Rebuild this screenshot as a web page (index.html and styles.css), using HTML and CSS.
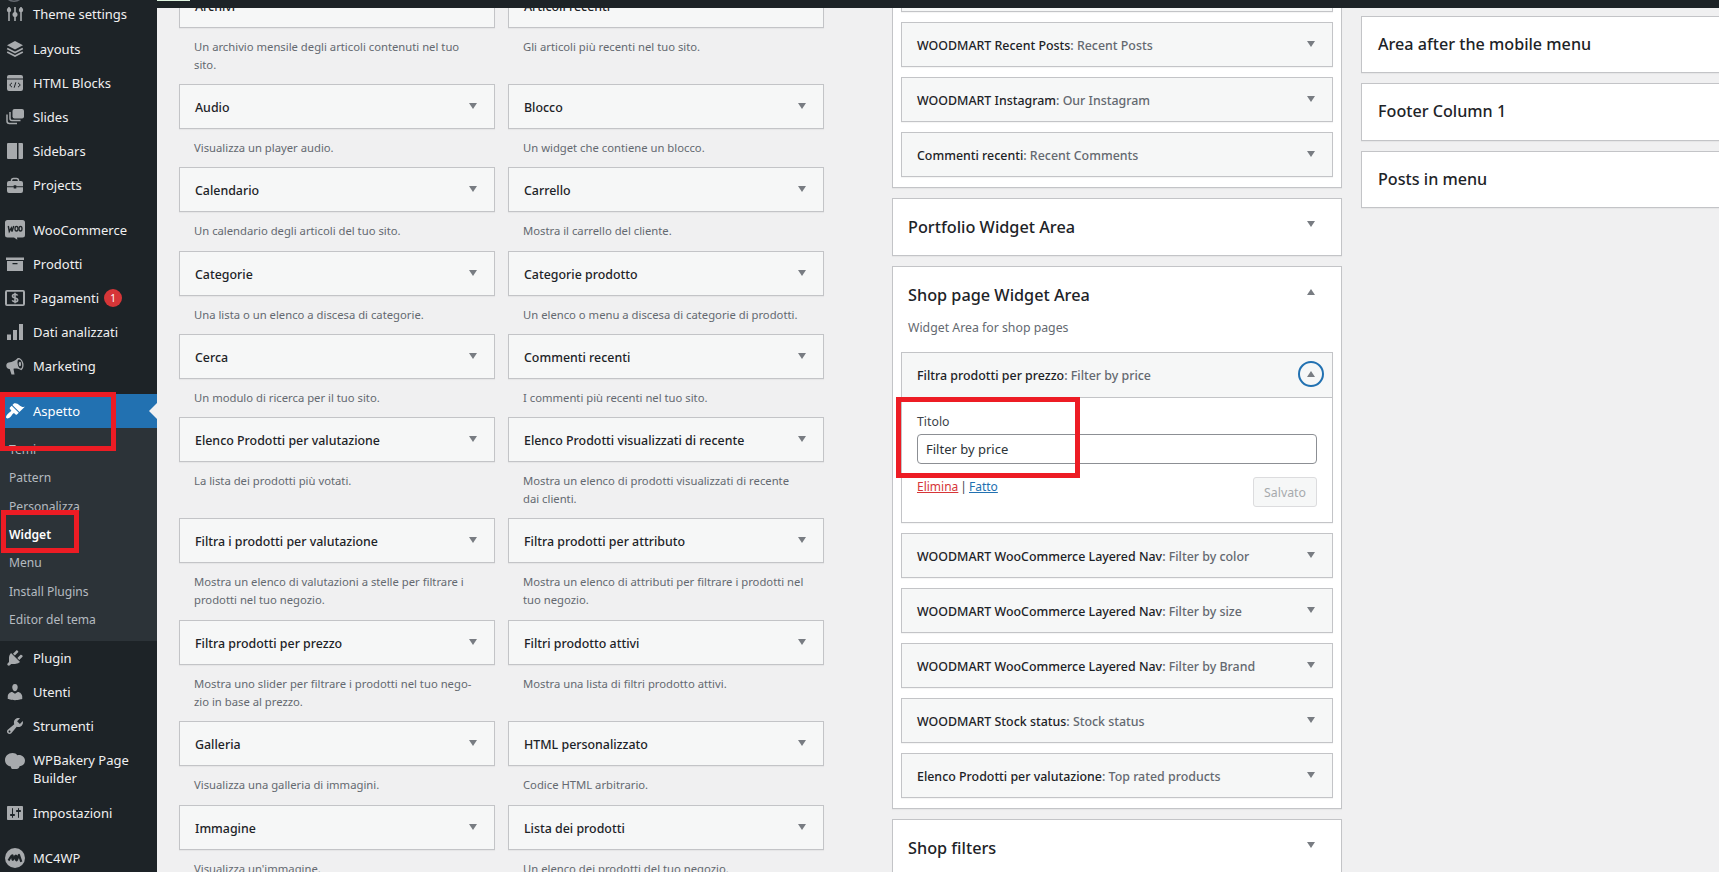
FILE: index.html
```html
<!DOCTYPE html>
<html lang="it">
<head>
    <meta charset="UTF-8">
    <meta name="viewport" content="width=device-width, initial-scale=1.0">
    <title>Widget</title>
    <link rel="stylesheet" href="styles.css">
</head>
<body>
    <!-- Menu di amministrazione -->
    <nav class="admin-menu">
        <svg class="menu-arc" viewBox="0 0 20 4"><path d="M4 0c3 3 9 3 12 0" fill="none" stroke="#646970" stroke-width="1.6"/></svg>
        <ul class="menu">
            <li><a class="menu-item" href="#">
                <svg class="icon" viewBox="0 0 20 20"><path d="M3.2 3h1.6v14H3.2zM9.2 3h1.6v14H9.2zM15.2 3h1.6v14h-1.6z"/><circle cx="4" cy="6" r="2.2"/><circle cx="10" cy="10.500" r="2.500"/><circle cx="16" cy="6" r="2.200"/></svg>
                <span>Theme settings</span></a></li>
            <li><a class="menu-item" href="#">
                <svg class="icon" viewBox="0 0 20 20"><path d="M10 2l8 4.200-8 4.200-8-4.200z"/><path d="M2.200 9.600L10 13.600l7.800-4M2.200 13L10 17l7.800-4" fill="none" stroke="#a7aaad" stroke-width="1.700"/></svg>
                <span>Layouts</span></a></li>
            <li><a class="menu-item" href="#">
                <svg class="icon" viewBox="0 0 20 20"><path d="M4 2h12a2 2 0 0 1 2 2v1.500H2V4a2 2 0 0 1 2-2zM2 6.600h16V16a2 2 0 0 1-2 2H4a2 2 0 0 1-2-2z"/><path d="M7 9.800l-2.300 2.200L7 14.200M13 9.800l2.300 2.200-2.300 2.200M10.800 9.300l-1.600 5.400" fill="none" stroke="#1d2327" stroke-width="1"/></svg>
                <span>HTML Blocks</span></a></li>
            <li><a class="menu-item" href="#">
                <svg class="icon" viewBox="0 0 20 20"><rect x="7.500" y="2" width="11.500" height="9.500" rx="2"/><path d="M5 5v6.500a2 2 0 0 0 2 2h8.500M2 7.500V14a2.500 2.500 0 0 0 2.500 2.500H12" fill="none" stroke="#a7aaad" stroke-width="1.500"/></svg>
                <span>Slides</span></a></li>
            <li><a class="menu-item" href="#">
                <svg class="icon" viewBox="0 0 20 20"><path d="M3 2h9v16H3a1 1 0 0 1-1-1V3a1 1 0 0 1 1-1zM13.500 2H17a1 1 0 0 1 1 1v14a1 1 0 0 1-1 1h-3.500z"/></svg>
                <span>Sidebars</span></a></li>
            <li><a class="menu-item" href="#">
                <svg class="icon" viewBox="0 0 20 20"><path d="M6.500 6V5A2 2 0 0 1 8.500 3.400h3A2 2 0 0 1 13.500 5v1" fill="none" stroke="#a7aaad" stroke-width="1.500"/><path d="M4 6h12a2 2 0 0 1 2 2v3.200h-6.700v-1H8.700v1H2V8a2 2 0 0 1 2-2zM2 12.300h6.700v1.200h2.600v-1.200H18V16a2 2 0 0 1-2 2H4a2 2 0 0 1-2-2z"/></svg>
                <span>Projects</span></a></li>
            <li class="separator"></li>
            <li><a class="menu-item" href="#">
                <svg class="icon" viewBox="0 0 20 20"><path d="M2.500 0h15A2.500 2.500 0 0 1 20 2.500v12.500a2.500 2.500 0 0 1-2.500 2.500h-5.500l.3 2.300-3.300-2.300H2.500A2.500 2.500 0 0 1 0 15V2.500A2.500 2.500 0 0 1 2.500 0z"/><path d="M3.300 6l1 5.500 2-3.500.7 3.500L8.700 6" fill="none" stroke="#1d2327" stroke-width="1.400"/><ellipse cx="11.500" cy="8.700" rx="1.500" ry="2.300" fill="none" stroke="#1d2327" stroke-width="1.300"/><ellipse cx="15.500" cy="8.700" rx="1.500" ry="2.300" fill="none" stroke="#1d2327" stroke-width="1.300"/></svg>
                <span>WooCommerce</span></a></li>
            <li><a class="menu-item" href="#">
                <svg class="icon" viewBox="0 0 20 20"><path d="M1 3.500h18V6H1zM2 7h16v10H2zm5.500 2v1.200h5V9z" fill-rule="evenodd"/></svg>
                <span>Prodotti</span></a></li>
            <li><a class="menu-item" href="#">
                <svg class="icon" viewBox="0 0 20 20"><path d="M2 2h16a2 2 0 0 1 2 2v12a2 2 0 0 1-2 2H2a2 2 0 0 1-2-2V4a2 2 0 0 1 2-2zm0 1.700v12.600h16V3.700z" fill-rule="evenodd"/><path d="M12.600 7.500c-.5-1-1.500-1.300-2.600-1.300-1.500 0-2.500.7-2.500 1.800 0 2.700 5.200 1.200 5.200 4 0 1.200-1.200 1.800-2.700 1.800-1.200 0-2.300-.5-2.700-1.500M10 4.800v10.400" fill="none" stroke="#a7aaad" stroke-width="1.600"/></svg>
                <span>Pagamenti</span><span class="badge">1</span></a></li>
            <li><a class="menu-item" href="#">
                <svg class="icon" viewBox="0 0 20 20"><path d="M2 12.500h4V18H2zM8 8h4v10H8zM14 2h4v16h-4z"/></svg>
                <span>Dati analizzati</span></a></li>
            <li><a class="menu-item" href="#">
                <svg class="icon" viewBox="0 0 20 20"><path d="M12.500 2.200C10.800 4.600 7.500 6 3.600 6.600 1.700 7 1 8.700 1.400 10.400c.4 1.700 1.700 2.700 3.300 2.500L6.500 18.500h3l-1-5.800c3.200-.3 6 .2 7.700 1.600 1.700-.6 2.700-3.700 2.200-6.700-.6-3.300-3.200-6.100-5.900-5.400zm1.200 1.400c1.500-.3 3 1.700 3.400 4.200.4 2.500-.1 4.600-1.300 4.800-1.300.2-2.700-1.800-3.100-4.300-.4-2.500-.2-4.500 1-4.700z" fill-rule="evenodd"/><ellipse cx="14.900" cy="8" rx="1.200" ry="2.200"/></svg>
                <span>Marketing</span></a></li>
            <li class="separator"></li>
            <li><a class="menu-item current" href="#">
                <svg class="icon" viewBox="0 0 20 20"><path d="M14.480 11.060L7.410 3.990l1.500-1.500c.5-.56 2.300-.47 3.510.32 1.210.8 1.430 1.280 2.910 2.100 1.180.64 2.450 1.260 4.450.85zm-.71.71L6.700 4.700 4.930 6.470c-.39.39-.39 1.020 0 1.410l1.060 1.060c.39.39.39 1.030 0 1.420-.6.6-1.430 1.110-2.210 1.690-.35.26-.7.53-1.010.84C1.430 14.230.4 16.080 1.400 17.070c.99 1 2.840-.03 4.180-1.360.31-.31.58-.66.85-1.020.57-.78 1.080-1.610 1.690-2.210.39-.39 1.020-.39 1.410 0l1.060 1.060c.39.39 1.020.39 1.410 0z"/></svg>
                <span>Aspetto</span></a>
                <ul class="submenu">
                    <li>Temi</li>
                    <li>Pattern</li>
                    <li>Personalizza</li>
                    <li class="active">Widget</li>
                    <li>Menu</li>
                    <li>Install Plugins</li>
                    <li>Editor del tema</li>
                </ul>
            </li>
            <li><a class="menu-item" href="#">
                <svg class="icon" viewBox="0 0 20 20"><path d="M13.110 4.360L9.870 7.600 8 5.730l3.240-3.240c.35-.34 1.050-.2 1.560.32.52.51.66 1.210.31 1.550zm-8 1.770l.91-1.120 9.010 9.010-1.190.84c-.71.71-2.630 1.160-3.820 1.160H6.140L4.900 17.260c-.59.59-1.540.59-2.120 0-.59-.58-.59-1.530 0-2.120L4 13.880V10c0-1.190.41-3.160 1.110-3.870zm7.260 3.970l3.240-3.240c.34-.35 1.040-.21 1.550.31.52.51.66 1.210.31 1.550l-3.240 3.250z"/></svg>
                <span>Plugin</span></a></li>
            <li><a class="menu-item" href="#">
                <svg class="icon" viewBox="0 0 20 20"><path d="M10 9.250c-2.270 0-2.730-3.440-2.730-3.440C7 4.020 7.820 2 9.970 2c2.160 0 2.980 2.020 2.710 3.810 0 0-.41 3.440-2.680 3.440zm0 2.570L12.720 10c2.390 0 4.520 2.330 4.520 4.530v2.490s-3.650 1.130-7.240 1.130c-3.650 0-7.240-1.130-7.240-1.130v-2.490c0-2.250 1.940-4.480 4.470-4.480z"/></svg>
                <span>Utenti</span></a></li>
            <li><a class="menu-item" href="#">
                <svg class="icon" viewBox="0 0 20 20"><path d="M16.680 9.770c-1.340 1.340-3.300 1.670-4.950.99l-5.410 6.520c-.99.99-2.590.99-3.580 0s-.99-2.590 0-3.570l6.520-5.420c-.68-1.650-.35-3.610.99-4.950 1.280-1.280 3.120-1.620 4.720-1.060l-2.890 2.890 2.820 2.820 2.860-2.870c.53 1.580.18 3.390-1.080 4.650zM3.810 16.210c.4.39 1.040.39 1.430 0 .4-.4.4-1.040 0-1.430-.39-.4-1.030-.4-1.430 0-.39.39-.39 1.030 0 1.430z"/></svg>
                <span>Strumenti</span></a></li>
            <li><a class="menu-item two-lines" href="#">
                <svg class="icon" viewBox="0 0 20 20"><path d="M7.500 2c2.300 0 3.800.9 4.800 2.200C16.500 3.300 20 6 20 9.700c0 3.200-2.500 5.200-5.400 5.500-.5 1.800-1.400 2.800-3 2.800H7.800c-1.300 0-1.900-1.200-2-2.600C2.300 15 0 12.300 0 9c0-4 3.300-7 7.500-7z"/></svg>
                <span>WPBakery Page Builder</span></a></li>
            <li><a class="menu-item" href="#">
                <svg class="icon" viewBox="0 0 20 20"><path d="M18 16V4c0-.55-.45-1-1-1H3c-.55 0-1 .45-1 1v12c0 .55.45 1 1 1h14c.55 0 1-.45 1-1zM8 11h1c.55 0 1 .45 1 1s-.45 1-1 1H8v1.500c0 .28-.22.5-.5.5s-.5-.22-.5-.5V13H6c-.55 0-1-.45-1-1s.45-1 1-1h1V5.500c0-.28.22-.5.5-.5s.5.22.5.5V11zm5-2h-1c-.55 0-1-.45-1-1s.45-1 1-1h1V5.500c0-.28.22-.5.5-.5s.5.22.5.5V7h1c.55 0 1 .45 1 1s-.45 1-1 1h-1v5.500c0 .28-.22.5-.5.5s-.5-.22-.5-.5V9z"/></svg>
                <span>Impostazioni</span></a></li>
            <li class="separator"></li>
            <li><a class="menu-item" href="#">
                <svg class="icon" viewBox="0 0 20 20"><circle cx="10" cy="10" r="10"/><path d="M3.500 12.500C5 10.500 6 7.500 7.200 7.300c1.200-.2-.6 4.500.6 4.500 1.300 0 1.700-4.300 3-4.300s-.6 4.800.6 4.800c1.400 0 1.500-4.600 2.600-5.300l2.300 6.800" fill="none" stroke="#1d2327" stroke-width="2.200" stroke-linejoin="round"/></svg>
                <span>MC4WP</span></a></li>
        </ul>
    </nav>

    <div class="page">
        <div class="admin-bar"><span class="bar-highlight"></span></div>
        <main class="content">
            <!-- Widget disponibili -->
            <section class="available">
                <div class="available-item"><div class="widget-top">Archivi<i class="arrow"></i></div><p>Un archivio mensile degli articoli contenuti nel tuo<br>sito.</p></div>
                <div class="available-item"><div class="widget-top">Articoli recenti<i class="arrow"></i></div><p>Gli articoli più recenti nel tuo sito.</p></div>
                <div class="available-item"><div class="widget-top">Audio<i class="arrow"></i></div><p>Visualizza un player audio.</p></div>
                <div class="available-item"><div class="widget-top">Blocco<i class="arrow"></i></div><p>Un widget che contiene un blocco.</p></div>
                <div class="available-item"><div class="widget-top">Calendario<i class="arrow"></i></div><p>Un calendario degli articoli del tuo sito.</p></div>
                <div class="available-item"><div class="widget-top">Carrello<i class="arrow"></i></div><p>Mostra il carrello del cliente.</p></div>
                <div class="available-item"><div class="widget-top">Categorie<i class="arrow"></i></div><p>Una lista o un elenco a discesa di categorie.</p></div>
                <div class="available-item"><div class="widget-top">Categorie prodotto<i class="arrow"></i></div><p>Un elenco o menu a discesa di categorie di prodotti.</p></div>
                <div class="available-item"><div class="widget-top">Cerca<i class="arrow"></i></div><p>Un modulo di ricerca per il tuo sito.</p></div>
                <div class="available-item"><div class="widget-top">Commenti recenti<i class="arrow"></i></div><p>I commenti più recenti nel tuo sito.</p></div>
                <div class="available-item"><div class="widget-top">Elenco Prodotti per valutazione<i class="arrow"></i></div><p>La lista dei prodotti più votati.</p></div>
                <div class="available-item"><div class="widget-top">Elenco Prodotti visualizzati di recente<i class="arrow"></i></div><p>Mostra un elenco di prodotti visualizzati di recente<br>dai clienti.</p></div>
                <div class="available-item"><div class="widget-top">Filtra i prodotti per valutazione<i class="arrow"></i></div><p>Mostra un elenco di valutazioni a stelle per filtrare i<br>prodotti nel tuo negozio.</p></div>
                <div class="available-item"><div class="widget-top">Filtra prodotti per attributo<i class="arrow"></i></div><p>Mostra un elenco di attributi per filtrare i prodotti nel<br>tuo negozio.</p></div>
                <div class="available-item"><div class="widget-top">Filtra prodotti per prezzo<i class="arrow"></i></div><p>Mostra uno slider per filtrare i prodotti nel tuo nego-<br>zio in base al prezzo.</p></div>
                <div class="available-item"><div class="widget-top">Filtri prodotto attivi<i class="arrow"></i></div><p>Mostra una lista di filtri prodotto attivi.</p></div>
                <div class="available-item"><div class="widget-top">Galleria<i class="arrow"></i></div><p>Visualizza una galleria di immagini.</p></div>
                <div class="available-item"><div class="widget-top">HTML personalizzato<i class="arrow"></i></div><p>Codice HTML arbitrario.</p></div>
                <div class="available-item"><div class="widget-top">Immagine<i class="arrow"></i></div><p>Visualizza un'immagine.</p></div>
                <div class="available-item"><div class="widget-top">Lista dei prodotti<i class="arrow"></i></div><p>Un elenco dei prodotti del tuo negozio.</p></div>
            </section>

            <!-- Aree widget -->
            <section class="areas">
                <div class="area first">
                    <div class="widget-top"></div>
                    <div class="widget-top">WOODMART Recent Posts<span class="in-title">: Recent Posts</span><i class="arrow"></i></div>
                    <div class="widget-top">WOODMART Instagram<span class="in-title">: Our Instagram</span><i class="arrow"></i></div>
                    <div class="widget-top">Commenti recenti<span class="in-title">: Recent Comments</span><i class="arrow"></i></div>
                </div>
                <div class="area">
                    <h2>Portfolio Widget Area<i class="arrow"></i></h2>
                </div>
                <div class="area open">
                    <h2>Shop page Widget Area<i class="arrow up"></i></h2>
                    <p class="area-description">Widget Area for shop pages</p>
                    <div class="widget">
                        <div class="widget-top">Filtra prodotti per prezzo<span class="in-title">: Filter by price</span><span class="toggle"><i class="arrow up"></i></span></div>
                        <form class="widget-form">
                            <label for="title">Titolo</label>
                            <input type="text" id="title" value="Filter by price">
                            <div class="widget-actions">
                                <div class="links"><a class="delete" href="#">Elimina</a><span>|</span><a href="#">Fatto</a></div>
                                <button type="button" disabled>Salvato</button>
                            </div>
                        </form>
                        <span class="mark mark-title"></span>
                    </div>
                    <div class="widget-top">WOODMART WooCommerce Layered Nav<span class="in-title">: Filter by color</span><i class="arrow"></i></div>
                    <div class="widget-top">WOODMART WooCommerce Layered Nav<span class="in-title">: Filter by size</span><i class="arrow"></i></div>
                    <div class="widget-top">WOODMART WooCommerce Layered Nav<span class="in-title">: Filter by Brand</span><i class="arrow"></i></div>
                    <div class="widget-top">WOODMART Stock status<span class="in-title">: Stock status</span><i class="arrow"></i></div>
                    <div class="widget-top">Elenco Prodotti per valutazione<span class="in-title">: Top rated products</span><i class="arrow"></i></div>
                </div>
                <div class="area">
                    <h2>Shop filters<i class="arrow"></i></h2>
                </div>
            </section>

            <section class="areas right">
                <div class="area"><h2>Area after the mobile menu</h2></div>
                <div class="area"><h2>Footer Column 1</h2></div>
                <div class="area"><h2>Posts in menu</h2></div>
            </section>
        </main>
    </div>

    <!-- Riquadri rossi sul menu -->
    <span class="mark mark-aspetto"></span>
    <span class="mark mark-widget"></span>
</body>
</html>
```
FILE: styles.css
```css
* {
    box-sizing: border-box;
}
body {
    margin: 0;
    height: 872px;
    display: flex;
    position: relative;
    overflow: hidden;
    background: #f0f0f1;
    color: #3c434a;
    font-family: "Noto Sans", sans-serif;
    font-size: 12.3px;
}
ul {
    margin: 0;
    padding: 0;
    list-style: none;
}
p, h2 {
    margin: 0;
}

/* Menu */
.admin-menu {
    width: 157px;
    flex: none;
    height: 872px;
    overflow: hidden;
    position: relative;
    background: #1d2327;
}
.menu {
    margin-top: -2.6px;
}
.menu-arc {
    position: absolute;
    left: 4px;
    top: -1px;
    width: 20px;
    height: 4px;
}
.menu-item {
    display: flex;
    align-items: center;
    height: 34.1px;
    padding-left: 5px;
    gap: 8px;
    position: relative;
    color: #f0f0f1;
    font-size: 13px;
    line-height: 18px;
    text-decoration: none;
}
.icon {
    width: 20px;
    height: 20px;
    flex: none;
    fill: #a7aaad;
}
.separator {
    height: 10.8px;
}
.menu-item.current {
    background: #2271b1;
    color: #fff;
}
.current .icon {
    fill: #fff;
}
.current::after {
    content: "";
    position: absolute;
    right: 0;
    top: 9px;
    border: 8px solid transparent;
    border-left-width: 0;
    border-right-color: #f0f0f1;
}
.menu-item.two-lines {
    height: 52.4px;
    align-items: flex-start;
    padding-top: 8px;
}
.badge {
    width: 18px;
    height: 18px;
    margin-left: -3px;
    border-radius: 9px;
    background: #d63638;
    color: #fff;
    font-size: 10px;
    line-height: 18px;
    text-align: center;
}
.submenu {
    height: 213px;
    padding: 8px 0 0 9px;
    background: #2c3338;
    color: #b5bbc0;
    font-size: 12.1px;
    line-height: 28.3px;
}
.submenu .active {
    color: #fff;
    font-weight: 600;
}

/* Contenuto */
.page {
    flex: 1;
    min-width: 0;
}
.admin-bar {
    position: relative;
    z-index: 1;
    height: 8px;
    background: #1d2327;
}
.bar-highlight {
    display: block;
    width: 33px;
    height: 1px;
    background: #dff5e0;
}
.content {
    display: flex;
    height: 864px;
    padding-left: 22px;
}
.available {
    flex: none;
    width: 645px;
    margin-top: -25px;
    display: grid;
    grid-template-columns: 316px 316px;
    grid-template-rows: 101px 83px 84px 83px 83px 101px 102px 101px 84px 83px;
    column-gap: 13px;
}
.available p {
    padding: 10px 0 0 15px;
    color: #646970;
    font-size: 11.28px;
    line-height: 18px;
}
.widget-top {
    flex: none;
    display: flex;
    align-items: center;
    height: 45px;
    padding: 1px 17px 0 15px;
    border: 1px solid #c3c4c7;
    background: #f6f7f7;
    box-shadow: 0 1px 1px rgba(0, 0, 0, 0.04);
    color: #1d2327;
    font-size: 12.4px;
    font-weight: 500;
    white-space: pre;
}
.in-title {
    color: #646970;
}
.arrow {
    width: 8px;
    height: 6px;
    margin: 0 0 2px auto;
    background: #787c82;
    clip-path: polygon(0 0, 100% 0, 50% 100%);
}
.arrow.up {
    clip-path: polygon(50% 0, 100% 100%, 0 100%);
}
.areas {
    flex: none;
    width: 450px;
    margin-left: 68px;
    display: flex;
    flex-direction: column;
    gap: 10px;
}
.area {
    flex: none;
    padding: 0 8px;
    border: 1px solid #c3c4c7;
    background: #fff;
    box-shadow: 0 1px 1px rgba(0, 0, 0, 0.04);
}
.area.first {
    height: 180px;
    padding-bottom: 10px;
    display: flex;
    flex-direction: column;
    justify-content: flex-end;
    gap: 10px;
    border-top: 0;
}
.area h2 {
    display: flex;
    justify-content: space-between;
    padding: 0 18px 0 7px;
    color: #1d2327;
    font-size: 16.25px;
    font-weight: 500;
    line-height: 56px;
}
.area h2 .arrow {
    margin: 22px 0 0;
}
.area.open {
    height: 543px;
    display: flex;
    flex-direction: column;
    gap: 10px;
}
.area-description {
    height: 29px;
    margin: -10px 0;
    padding-left: 7px;
    color: #646970;
    line-height: 10px;
}
.area.open > .widget {
    position: relative;
    flex: none;
    height: 171px;
    margin-top: 10px;
    border: 1px solid #c3c4c7;
    box-shadow: 0 1px 1px rgba(0, 0, 0, 0.04);
}
.area-description + .widget {
    margin-top: 0 !important;
}
.widget .widget-top {
    height: 45px;
    padding: 0 8px 0 15px;
    border-width: 0 0 1px;
    box-shadow: none;
}
.toggle {
    display: flex;
    align-items: center;
    width: 26px;
    height: 26px;
    margin: 0 0 2px auto;
    border: 2px solid #2271b1;
    border-radius: 50%;
}
.toggle .arrow {
    margin: 0 auto;
}
.widget-form {
    padding: 14px 15px 0;
}
.widget-form label {
    display: block;
    height: 22px;
    line-height: 19px;
}
.widget-form input {
    display: block;
    width: 400px;
    height: 30px;
    padding: 0 8px;
    border: 1px solid #8c8f94;
    border-radius: 4px;
    background: #fff;
    color: #2c3338;
    font: 13px "Noto Sans", sans-serif;
}
.widget-actions {
    display: flex;
    justify-content: space-between;
    padding-top: 13px;
    line-height: 20px;
}
.links {
    display: flex;
    gap: 2px;
    font-size: 12px;
}
.widget-actions a {
    color: #2271b1;
}
.widget-actions a.delete {
    color: #d63638;
}
.widget-actions button {
    width: 64px;
    height: 30px;
    padding: 0;
    border: 1px solid #dcdcde;
    border-radius: 3px;
    background: #f6f7f7;
    color: #a7aaad;
    font: 12.3px "Noto Sans", sans-serif;
}

/* Colonna destra, tagliata dal bordo della finestra */
.areas.right {
    flex: 1;
    min-width: 0;
    margin: 8px 0 0 19px;
}
.right .area {
    border-right: 0;
}
.right h2 {
    padding-left: 8px;
    font-size: 16.15px;
    line-height: 55.3px;
}

/* Riquadri rossi */
.mark {
    position: absolute;
    border: 5px solid #ed1c24;
    pointer-events: none;
}
.mark-aspetto {
    left: 0;
    top: 392px;
    width: 116px;
    height: 59px;
}
.mark-widget {
    left: 1px;
    top: 510px;
    width: 78px;
    height: 43px;
}
.mark-title {
    left: -6px;
    top: 44px;
    width: 184px;
    height: 81px;
}
```
